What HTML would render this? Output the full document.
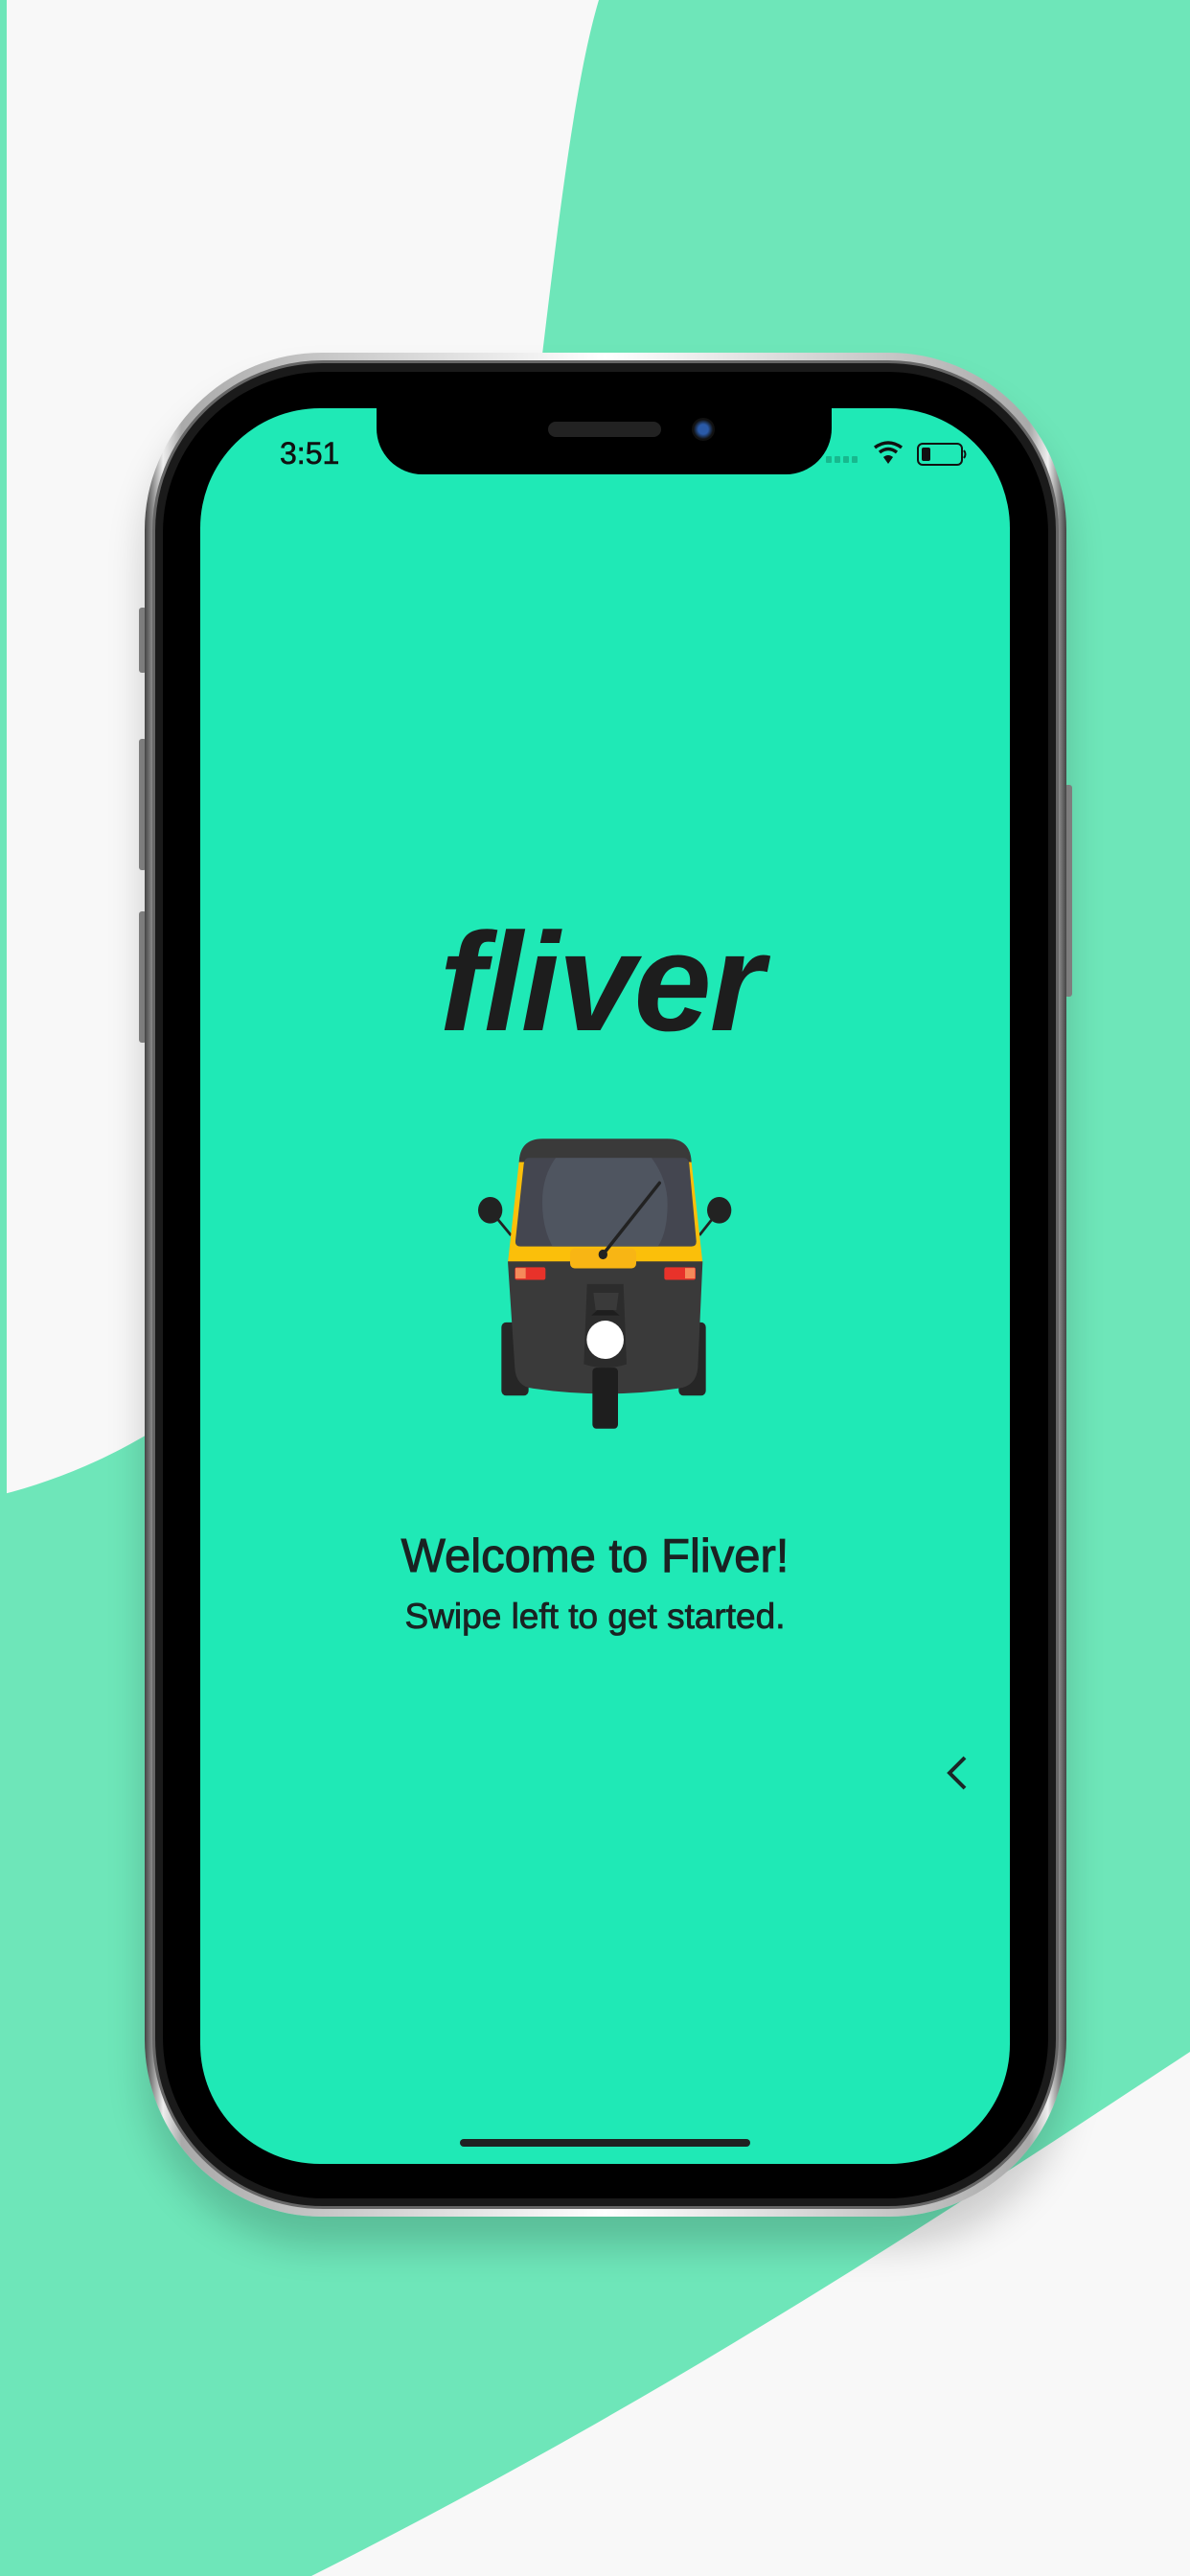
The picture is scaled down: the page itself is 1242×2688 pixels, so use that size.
<!DOCTYPE html>
<html><head><meta charset="utf-8"><style>
html,body{margin:0;padding:0}
body{width:1242px;height:2688px;position:relative;overflow:hidden;background:#f8f8f8;font-family:"Liberation Sans",sans-serif}
.abs{position:absolute}
</style></head><body>
<svg class="abs" style="left:0;top:0" width="1242" height="2688" viewBox="0 0 1242 2688">
<path d="M625 0 C565 200 545 800 430 1150 C340 1400 160 1520 0 1560 L0 2688 L325 2688 C700 2500 1000 2300 1242 2141 L1242 0 Z" fill="#6ee6b9"/>
<rect x="0" y="0" width="7" height="1560" fill="#6ee6b9"/>
</svg>
<div class="abs" style="left:145px;top:634px;width:8px;height:68px;background:#888;border-radius:3px"></div>
<div class="abs" style="left:145px;top:771px;width:8px;height:137px;background:#888;border-radius:3px"></div>
<div class="abs" style="left:145px;top:951px;width:8px;height:137px;background:#888;border-radius:3px"></div>
<div class="abs" style="left:1111px;top:819px;width:8px;height:221px;background:#888;border-radius:3px"></div>
<div class="abs" style="left:151px;top:368px;width:962px;height:1945px;border-radius:185px;background:linear-gradient(90deg,#444,#eee 2%,#aaa 4%,#fff 50%,#aaa 96%,#eee 98%,#444);box-shadow:0 30px 40px rgba(0,0,0,0.18)"></div>
<div class="abs" style="left:159px;top:376px;width:946px;height:1929px;border-radius:178px;background:#1a1a1a;border:3px solid #666;box-sizing:border-box"></div>
<div class="abs" style="left:170px;top:388px;width:924px;height:1906px;border-radius:168px;background:#000"></div>
<div class="abs" style="left:209px;top:426px;width:845px;height:1832px;border-radius:125px;background:#1fe9b6;overflow:hidden"></div>
<div class="abs" style="left:393px;top:420px;width:475px;height:75px;background:#000;border-radius:0 0 48px 48px"></div>
<div class="abs" style="left:572px;top:440px;width:118px;height:16px;background:#222;border-radius:8px"></div>
<div class="abs" style="left:722px;top:436px;width:24px;height:24px;background:radial-gradient(circle,#2a5aa8 30%,#111 60%);border-radius:50%"></div>
<div class="abs" style="left:292px;top:455px;font-size:32px;color:#111;-webkit-text-stroke:0.6px #111">3:51</div>
<svg class="abs" style="left:860px;top:458px" width="150" height="30" viewBox="0 0 150 30">
<g fill="#17b98e"><rect x="2" y="18" width="6" height="7" rx="1"/><rect x="11" y="18" width="6" height="7" rx="1"/><rect x="20" y="18" width="6" height="7" rx="1"/><rect x="29" y="18" width="6" height="7" rx="1"/></g>
<path d="M53 9 Q67 -1 81 9" stroke="#111" stroke-width="3.5" fill="none"/>
<path d="M58 14 Q67 7 76 14" stroke="#111" stroke-width="3.5" fill="none"/>
<path d="M62 19 L67 26 L72 19 Q67 15 62 19Z" fill="#111"/>
<rect x="98" y="5" width="46" height="22" rx="5" fill="none" stroke="#111" stroke-width="2"/>
<rect x="102" y="9" width="9" height="14" rx="2" fill="#111"/>
<path d="M146 12 Q149 16 146 20" stroke="#111" stroke-width="2" fill="none"/>
</svg>
<div class="abs" style="left:6px;width:1242px;top:940px;text-align:center;font-size:146px;font-weight:bold;font-style:italic;color:#1d1d1d;letter-spacing:-2px;line-height:170px">fliver</div>
<svg class="abs" style="left:480px;top:940px" width="320" height="570" viewBox="0 0 960 1568" preserveAspectRatio="none">
<line x1="95" y1="888" x2="160" y2="960" stroke="#222" stroke-width="8"/>
<line x1="812" y1="888" x2="750" y2="960" stroke="#222" stroke-width="8"/>
<circle cx="95" cy="888" r="38" fill="#222"/>
<circle cx="812" cy="888" r="38" fill="#222"/>
<rect x="130" y="1210" width="85" height="210" rx="14" fill="#262626"/>
<rect x="685" y="1210" width="85" height="210" rx="14" fill="#262626"/>
<path d="M185 755 Q185 683 260 683 L650 683 Q725 683 725 755 Z" fill="#3a3a3a"/>
<path d="M185 750 L725 750 L760 1040 L150 1040 Z" fill="#fbbf0a"/>
<path d="M215 738 L700 738 Q715 738 718 755 L740 975 Q742 992 725 992 L190 992 Q172 992 174 975 L200 755 Q203 738 215 738Z" fill="#444650"/>
<path d="M300 738 L600 738 Q650 800 650 870 Q650 950 620 992 L290 992 Q258 940 258 865 Q258 790 300 738Z" fill="#4f5560"/>
<path d="M150 1035 L760 1035 L745 1340 Q740 1395 680 1400 Q455 1430 230 1400 Q175 1395 172 1340 Z" fill="#3a3a3a"/>
<rect x="345" y="998" width="207" height="57" rx="14" fill="#f8b514"/>
<rect x="172" y="1052" width="96" height="36" rx="6" fill="#e8322a"/>
<rect x="174" y="1054" width="32" height="30" fill="#f58a5a"/>
<rect x="640" y="1052" width="98" height="36" rx="6" fill="#e8322a"/>
<rect x="705" y="1054" width="31" height="30" fill="#f58a5a"/>
<rect x="415" y="1340" width="80" height="175" rx="12" fill="#1e1e1e"/>
<path d="M398 1100 L512 1100 L522 1330 Q455 1350 388 1330 Z" fill="#2c2c2c"/>
<path d="M418 1125 L497 1125 L490 1175 L425 1175Z" fill="#3a3a3a"/>
<path d="M412 1190 L500 1190 L480 1175 L430 1175Z" fill="#1e1e1e"/>
<ellipse cx="455" cy="1260" rx="58" ry="55" fill="#fff"/>
<line x1="448" y1="1015" x2="625" y2="810" stroke="#222" stroke-width="10" stroke-linecap="round"/>
<circle cx="448" cy="1015" r="14" fill="#222"/>
</svg>
<div class="abs" style="left:0;width:1242px;top:1594px;text-align:center;font-size:49px;color:#1a2222;line-height:60px;-webkit-text-stroke:1px #1a2222">Welcome to Fliver!</div>
<div class="abs" style="left:0;width:1242px;top:1664px;text-align:center;font-size:37px;color:#1a2222;line-height:46px;-webkit-text-stroke:0.8px #1a2222">Swipe left to get started.</div>
<svg class="abs" style="left:985px;top:1830px" width="30" height="40" viewBox="0 0 30 40"><polyline points="22,4 6,20 22,36" fill="none" stroke="#1c2626" stroke-width="4"/></svg>
<div class="abs" style="left:480px;top:2232px;width:303px;height:8px;background:#1f2222;border-radius:4px"></div>
</body></html>
